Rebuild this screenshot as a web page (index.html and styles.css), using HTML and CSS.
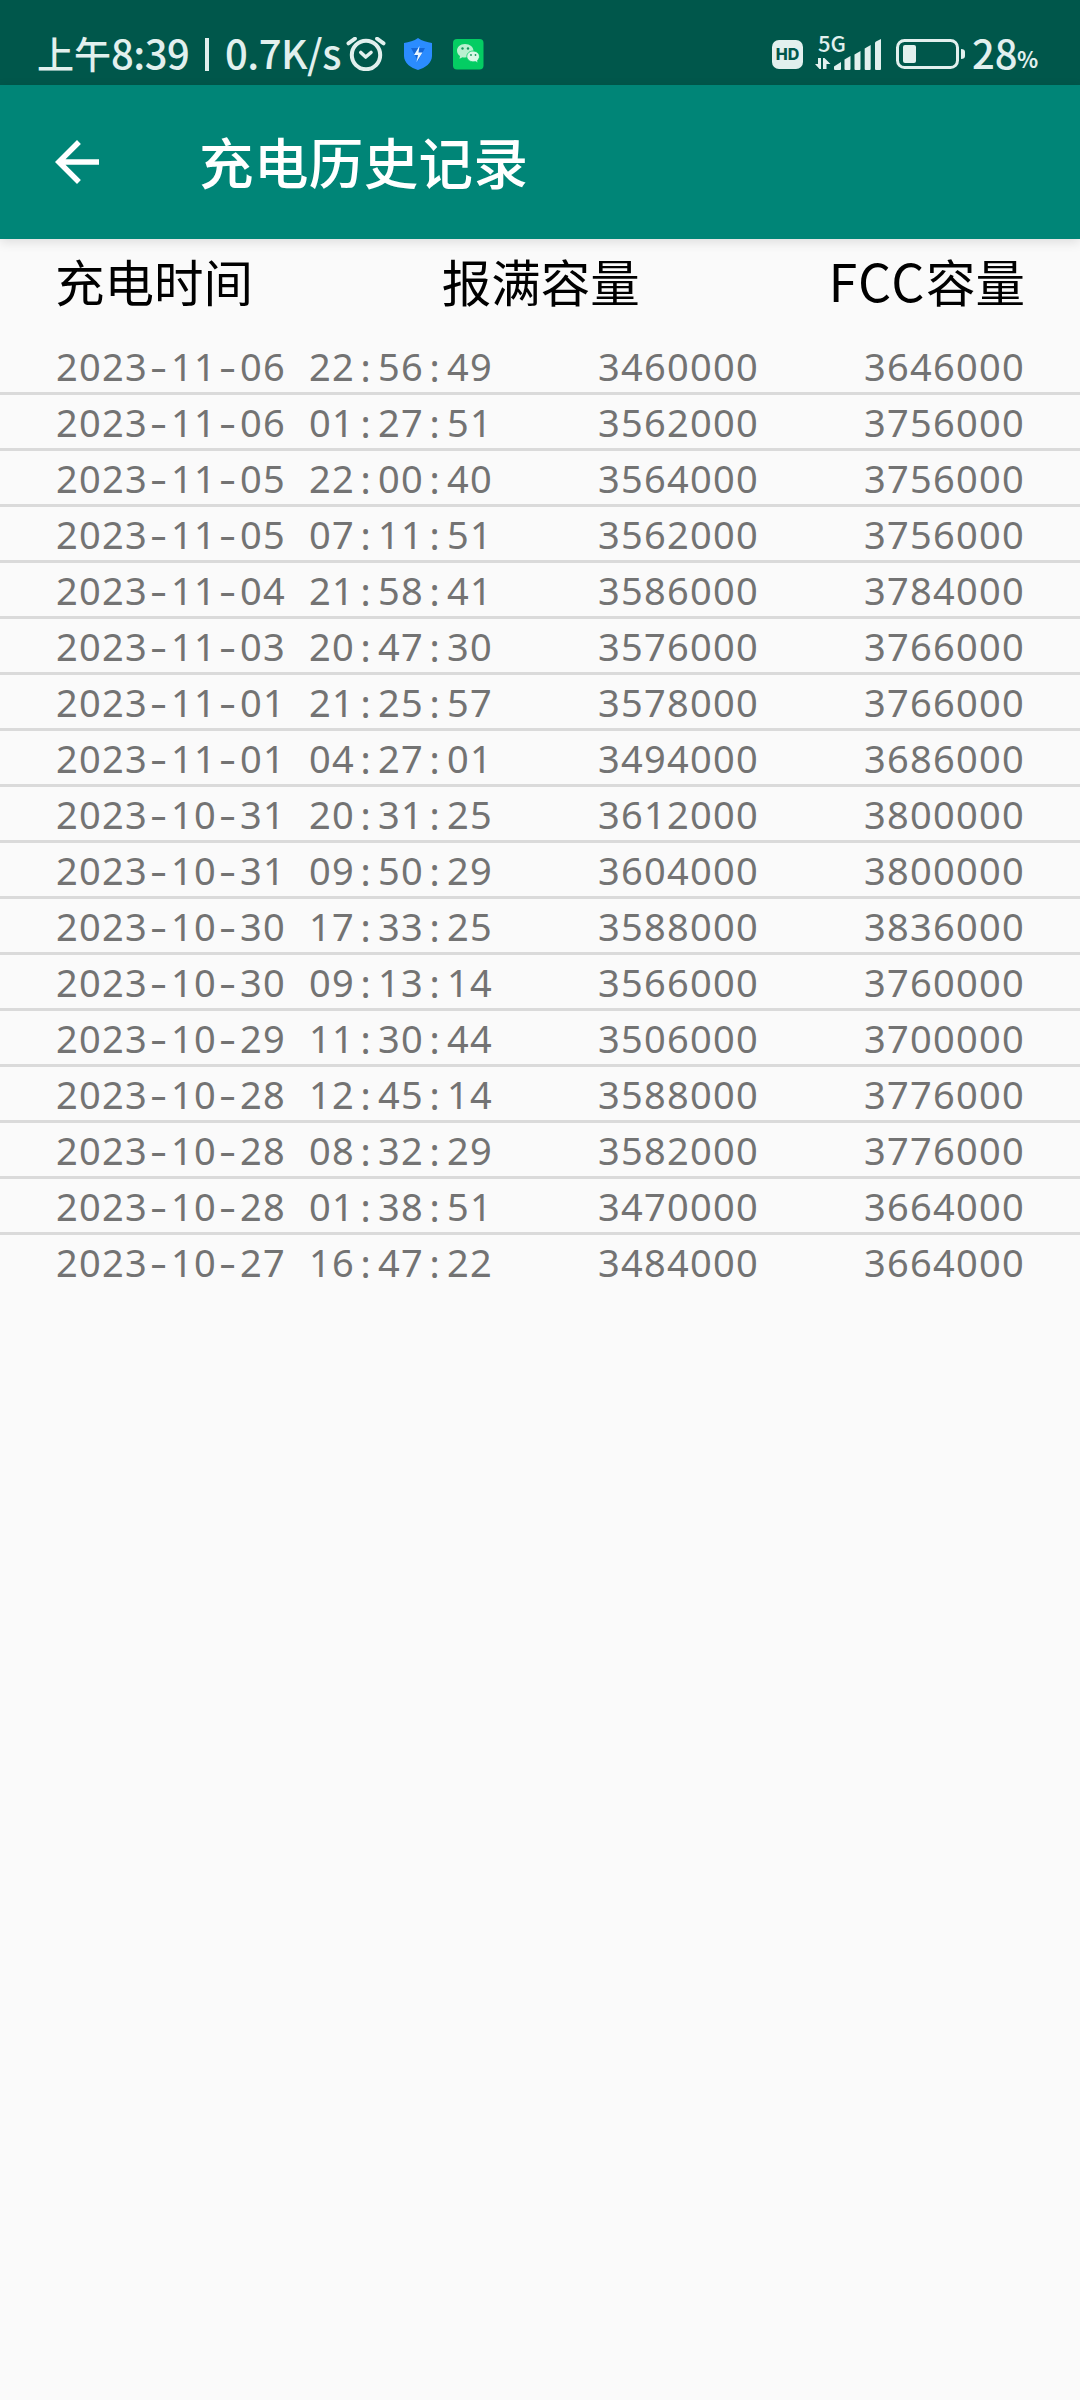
FILE: index.html
```html
<!DOCTYPE html>
<html lang="zh-CN">
<head>
    <meta charset="UTF-8">
    <title>充电历史记录</title>
    <link rel="stylesheet" href="styles.css">
</head>
<body>
    <div class="status-bar">
        <span class="clock">上午</span><span class="time">8:39</span>
        <span class="divider"></span>
        <span class="speed">0.7K/s</span>
        <svg class="alarm" width="40" height="34" viewBox="0 0 40 34" fill="none" stroke="#e2f0ee" stroke-linecap="round">
            <circle cx="20" cy="18" r="14.2" stroke-width="4"/>
            <path d="M2.4 6.4L9 1.6M31 1.6L37.600 6.400" stroke-width="3.800"/>
            <path d="M14.800 15.500L19.700 20L25 15.500" stroke-width="3.600" stroke-linejoin="round"/>
        </svg>
        <svg class="shield" width="28" height="34" viewBox="0 0 28 34">
            <path d="M14 1C10 4 5 5 0 6V19C0 26 7 31 14 33C21 31 28 26 28 19V6C23 5 18 4 14 1Z" fill="#2b8cff"/>
            <path d="M7 11H21L14 24Z" fill="#1467d8"/>
            <path d="M15.500 9L10 18H14L12.500 25L18.500 15.500H14.500Z" fill="#e8f6ff"/>
        </svg>
        <svg class="wechat" width="31" height="34" viewBox="0 0 31 34">
            <rect y="2" width="30.500" height="30.500" rx="4" fill="#04cd63"/>
            <path d="M12 7C7 7 4 10 4 13.800C4 16 5.200 17.800 7 19L6.500 21.800L9.500 20.300C15.500 21.500 20.500 18 20.500 13.800C20.500 10 17 7 12 7Z" fill="#b9f0d0"/>
            <path d="M20 14C16.500 14 13.800 16.500 13.800 19.500C13.800 23 18 25.700 22.500 24.600L25 26L24.500 23.500C28.500 20 26 14 20 14Z" fill="#d8f8e6" stroke="#04cd63" stroke-width="0.800"/>
            <g fill="#14955a">
                <circle cx="9.500" cy="11.500" r="1.200"/><circle cx="15" cy="11.500" r="1.200"/>
                <circle cx="18" cy="18" r="0.900"/><circle cx="22.500" cy="18" r="0.900"/>
            </g>
        </svg>
        <div class="status-right">
            <span class="hd">HD</span>
            <div class="network">
                <span class="network-type">5G</span>
                <svg width="68" height="34" viewBox="0 0 68 34" fill="#e2f0ee">
                    <path d="M0 27H3V21H6V32H4.500ZM8 21H9.500L15.500 27H11.500V32H8Z"/>
                    <path d="M19 29.500L26 25V32Q26 33 25 33H20Q19 33 19 32Z"/>
                    <path d="M29.500 22.500L35.500 19V32Q35.500 33 34.500 33H30.500Q29.500 33 29.500 32Z"/>
                    <path d="M39.500 17.500L45.500 14V32Q45.500 33 44.500 33H40.500Q39.500 33 39.500 32Z"/>
                    <path d="M49.700 11.500L55.700 8V32Q55.700 33 54.700 33H50.700Q49.700 33 49.700 32Z"/>
                    <path d="M60 6Q60 5 61 4.500L66 2V32Q66 33 65 33H61Q60 33 60 32Z"/>
                </svg>
            </div>
            <svg class="battery" width="70" height="34" viewBox="0 0 70 34">
                <rect x="1.500" y="3.500" width="60" height="27" rx="7" fill="none" stroke="#e2f0ee" stroke-width="3"/>
                <rect x="7" y="8" width="13" height="18" rx="2" fill="#e2f0ee"/>
                <path d="M65 12Q69 12 69 15V19Q69 22 65 22Z" fill="#e2f0ee"/>
            </svg>
            <span class="level">28</span><span class="percent">%</span>
        </div>
    </div>

    <header class="app-bar">
        <svg class="back" width="66" height="66" viewBox="0 0 24 24">
            <path d="M20 11H7.830l5.590-5.590L12 4l-8 8 8 8 1.410-1.410L7.830 13H20v-2z" fill="#fff"/>
        </svg>
        <h1>充电历史记录</h1>
    </header>

    <div class="table-head">
        <span>充电时间</span>
        <span>报满容量</span>
        <span><span class="latin">FCC</span>容量</span>
    </div>
    <div class="records" id="records"></div>

    <script>
        const records = [
            ['2023-11-06 22:56:49', 3460000, 3646000],
            ['2023-11-06 01:27:51', 3562000, 3756000],
            ['2023-11-05 22:00:40', 3564000, 3756000],
            ['2023-11-05 07:11:51', 3562000, 3756000],
            ['2023-11-04 21:58:41', 3586000, 3784000],
            ['2023-11-03 20:47:30', 3576000, 3766000],
            ['2023-11-01 21:25:57', 3578000, 3766000],
            ['2023-11-01 04:27:01', 3494000, 3686000],
            ['2023-10-31 20:31:25', 3612000, 3800000],
            ['2023-10-31 09:50:29', 3604000, 3800000],
            ['2023-10-30 17:33:25', 3588000, 3836000],
            ['2023-10-30 09:13:14', 3566000, 3760000],
            ['2023-10-29 11:30:44', 3506000, 3700000],
            ['2023-10-28 12:45:14', 3588000, 3776000],
            ['2023-10-28 08:32:29', 3582000, 3776000],
            ['2023-10-28 01:38:51', 3470000, 3664000],
            ['2023-10-27 16:47:22', 3484000, 3664000]
        ];

        // punctuation gets the same cell width as a digit
        function formatTime(time) {
            return time
                .replace(/[-: ]/g, c => {
                    const name = c === '-' ? 'dash' : c === ':' ? 'colon' : 'space';
                    return `<span class="${name}">${c}</span>`;
                });
        }

        document.getElementById('records').innerHTML = records.map(r => `
            <div class="record">
                <span>${formatTime(r[0])}</span>
                <span>${r[1]}</span>
                <span>${r[2]}</span>
            </div>
        `).join('');
    </script>
</body>
</html>
```
FILE: styles.css
```css
body {
    margin: 0;
    min-height: 100vh;
    background-color: #fafafa;
    font-family: "Noto Sans CJK SC", sans-serif;
}
.status-bar {
    display: flex;
    align-items: center;
    box-sizing: border-box;
    height: 85px;
    padding: 23px 42px 0 37px;
    background-color: #00574b;
    color: #e2f0ee;
    font-size: 40px;
    font-weight: 500;
    line-height: 50px;
    white-space: nowrap;
}
.status-bar svg {
    display: block;
    flex: none;
}
.clock {
    width: 74px;
    font-size: 37px;
    padding-bottom: 2px;
}
.time,
.speed,
.level {
    padding-bottom: 4px;
}
.time {
    width: 79px;
    letter-spacing: -0.5px;
}
.divider {
    width: 4px;
    height: 33px;
    margin: 0 16px 0 15px;
    background-color: #e2f0ee;
}
.speed {
    width: 116px;
    letter-spacing: -0.5px;
}
.alarm {
    margin-left: 5px;
}
.shield {
    margin-left: 18px;
}
.wechat {
    margin-left: 21px;
}
.status-right {
    display: flex;
    align-items: center;
    margin-left: auto;
}
.hd {
    width: 31px;
    height: 29px;
    border-radius: 7px;
    background-color: #e2f0ee;
    color: #00574b;
    font-family: Inter, sans-serif;
    font-size: 16px;
    font-weight: 800;
    line-height: 29px;
    text-align: center;
}
.network {
    position: relative;
    margin-left: 12px;
}
.network-type {
    position: absolute;
    left: 3px;
    top: -7px;
    font-size: 22px;
    line-height: 24px;
}
.battery {
    margin-left: 13px;
}
.level {
    margin-left: 6px;
    width: 45px;
}
.percent {
    width: 21px;
    padding-top: 7px;
    font-size: 22px;
    font-weight: 700;
}
.app-bar {
    position: relative;
    display: flex;
    align-items: center;
    height: 154px;
    padding-left: 44px;
    background-color: #008577;
    box-shadow: 0 3px 11px rgba(0, 0, 0, 0.12);
}
.app-bar h1 {
    margin: 0 0 0 89px;
    padding-bottom: 3px;
    color: #fff;
    font-size: 54.500px;
    font-weight: 500;
    letter-spacing: 0.4px;
    line-height: 80px;
}
.table-head {
    display: flex;
    justify-content: space-between;
    height: 100px;
    padding: 0 55px;
    color: #000;
    font-size: 49.500px;
    line-height: 84px;
}
.latin {
    font-size: 52px;
    letter-spacing: 1.600px;
    line-height: 1;
}
.record {
    display: flex;
    justify-content: space-between;
    height: 53px;
    padding: 0 55px 0 56px;
    border-bottom: 3px solid #dadada;
    color: #737373;
    font-family: "Noto Sans", sans-serif;
    font-size: 38px;
    letter-spacing: 1.260px;
    line-height: 54px;
}
.record:last-child {
    border-bottom: none;
}
.dash,
.colon,
.space {
    display: inline-block;
    width: 23px;
    letter-spacing: 0;
    text-align: center;
    white-space: pre;
}
.dash {
    transform: translateX(-1px) scaleX(1.400);
}
.colon {
    transform: translate(-1px, 1px);
}
```
